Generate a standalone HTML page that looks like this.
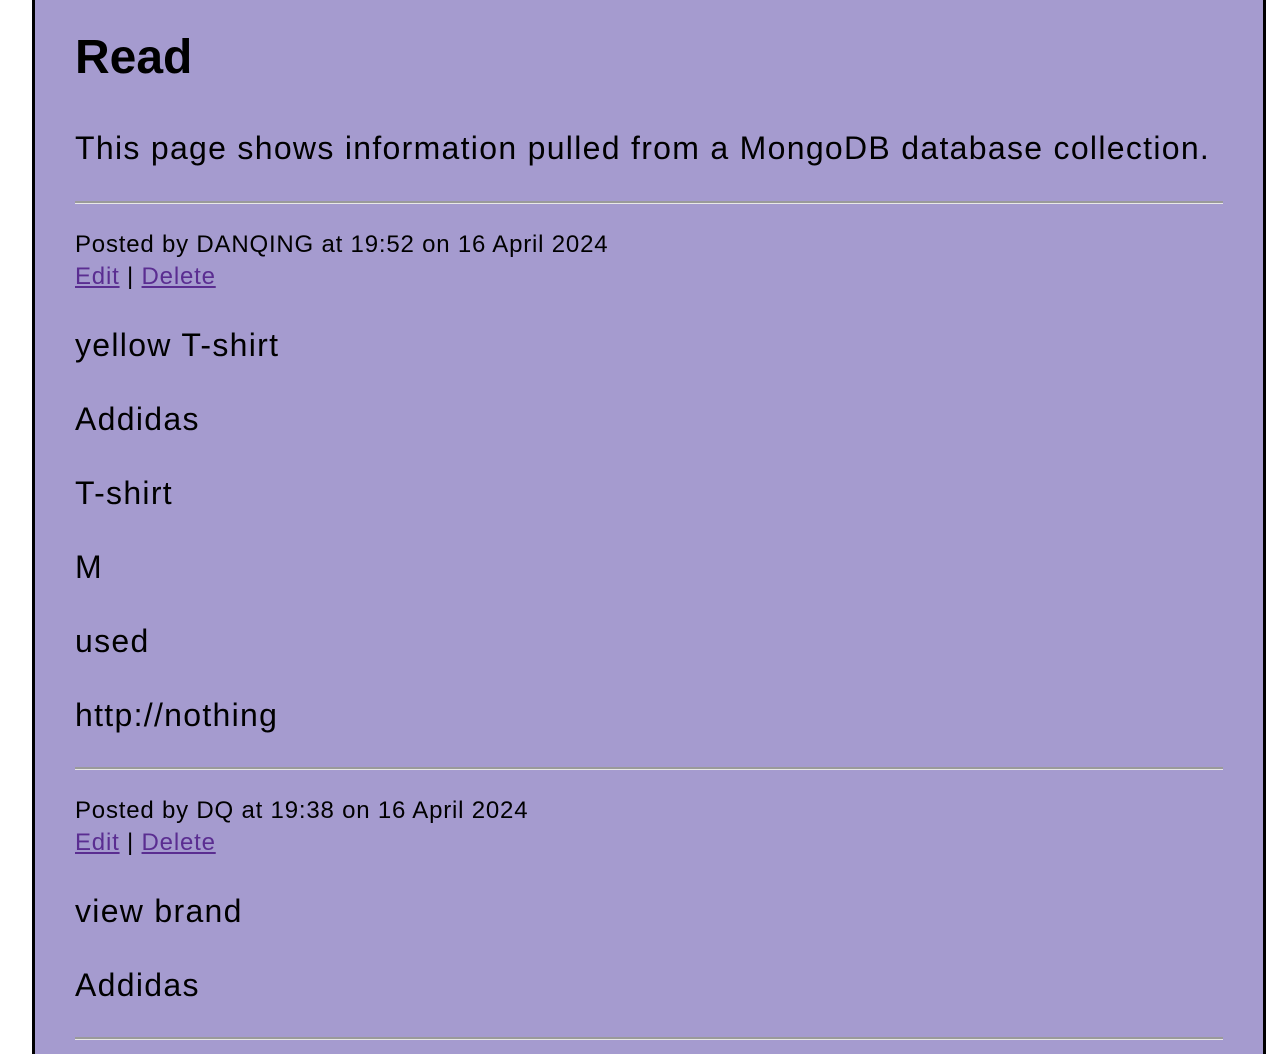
<!DOCTYPE html>
<html><head><meta charset="utf-8"><style>
html,body{margin:0;padding:0;background:#fff;width:1278px;height:1054px;overflow:hidden}
body{font-family:"Liberation Sans",sans-serif;color:#000}
.box{position:absolute;left:32px;top:0;width:1228px;height:1054px;border-left:3px solid #000;border-right:3px solid #000;background:#a59bcf;overflow:hidden}
.in{position:absolute;left:40px;top:0;width:1148px}
.t{position:absolute;left:0;white-space:nowrap}
h1{margin:0;font-size:48px;font-weight:bold}
.big{font-size:32px;letter-spacing:1.3px}
.sm{font-size:24px;letter-spacing:0.8px}
a{color:#5a2d91}
.hr{position:absolute;left:0;width:1148px;height:0;border-top:2px solid #9a9a9a;border-bottom:1px solid #e8e8e8}
</style></head><body>
<div class="box"><div class="in">
<h1 class="t" style="top:30px">Read</h1>
<div class="t big" style="top:130px">This page shows information pulled from a MongoDB database collection.</div>
<div class="hr" style="top:201px"></div>
<div class="t sm" style="top:231px">Posted by DANQING at 19:52 on 16 April 2024</div>
<div class="t sm" style="top:263px"><a href="#">Edit</a> | <a href="#">Delete</a></div>
<div class="t big" style="top:327px">yellow T-shirt</div>
<div class="t big" style="top:401px">Addidas</div>
<div class="t big" style="top:475px">T-shirt</div>
<div class="t big" style="top:549px">M</div>
<div class="t big" style="top:623px">used</div>
<div class="t big" style="top:697px">http://nothing</div>
<div class="hr" style="top:767px"></div>
<div class="t sm" style="top:797px">Posted by DQ at 19:38 on 16 April 2024</div>
<div class="t sm" style="top:829px"><a href="#">Edit</a> | <a href="#">Delete</a></div>
<div class="t big" style="top:893px">view brand</div>
<div class="t big" style="top:967px">Addidas</div>
<div class="hr" style="top:1037px"></div>
</div></div>
</body></html>
